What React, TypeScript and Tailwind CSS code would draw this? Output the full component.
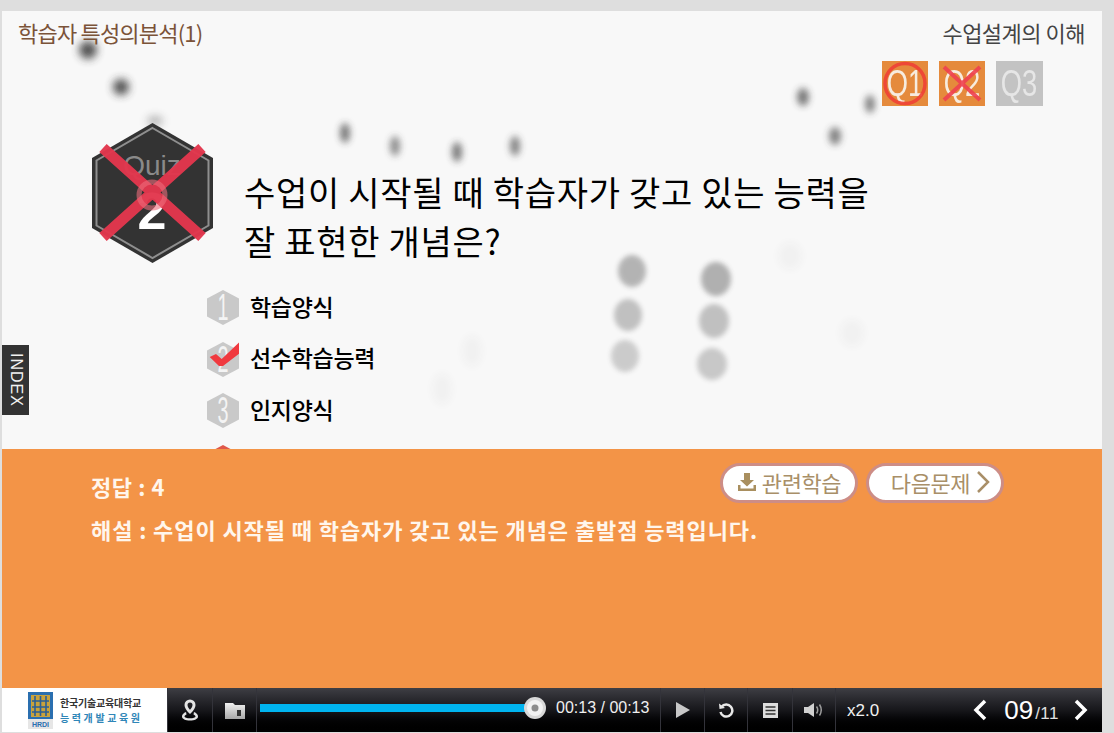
const kr = "font-['Noto_Sans_CJK_KR','Noto_Sans',sans-serif]";

const dots = [
  { x: 86, y: 39, rx: 9, ry: 9, o: 0.85, b: "b6" },
  { x: 119, y: 76, rx: 8, ry: 8, o: 0.85, b: "b6" },
  { x: 153, y: 110, rx: 8, ry: 5, o: 0.35, b: "b6" },
  { x: 343, y: 122, rx: 5, ry: 10, o: 0.65, b: "b4" },
  { x: 393, y: 135, rx: 5, ry: 10, o: 0.55, b: "b4" },
  { x: 455, y: 141, rx: 5, ry: 10, o: 0.65, b: "b4" },
  { x: 513, y: 135, rx: 5, ry: 10, o: 0.6, b: "b4" },
  { x: 801, y: 86, rx: 6, ry: 9, o: 0.65, b: "b4" },
  { x: 868, y: 93, rx: 5, ry: 9, o: 0.6, b: "b4" },
  { x: 833, y: 125, rx: 6, ry: 9, o: 0.6, b: "b4" },
  { x: 630, y: 260, rx: 14, ry: 16, o: 0.34, b: "b2" },
  { x: 714, y: 268, rx: 15, ry: 17, o: 0.36, b: "b2" },
  { x: 626, y: 304, rx: 14, ry: 16, o: 0.28, b: "b2" },
  { x: 712, y: 310, rx: 15, ry: 17, o: 0.28, b: "b2" },
  { x: 623, y: 345, rx: 14, ry: 16, o: 0.22, b: "b2" },
  { x: 710, y: 353, rx: 15, ry: 16, o: 0.24, b: "b2" },
  { x: 788, y: 245, rx: 12, ry: 14, o: 0.03, b: "b6" },
  { x: 850, y: 322, rx: 12, ry: 14, o: 0.03, b: "b6" },
  { x: 470, y: 340, rx: 10, ry: 16, o: 0.03, b: "b6" },
  { x: 440, y: 378, rx: 10, ry: 16, o: 0.03, b: "b6" },
];

function Backdrop() {
  return (
    <svg className="absolute inset-0" width="1100" height="438">
      <defs>
        <filter id="b2" x="-100%" y="-100%" width="300%" height="300%">
          <feGaussianBlur stdDeviation="2.500" />
        </filter>
        <filter id="b4" x="-150%" y="-100%" width="400%" height="300%">
          <feGaussianBlur stdDeviation="3.500" />
        </filter>
        <filter id="b6" x="-100%" y="-100%" width="300%" height="300%">
          <feGaussianBlur stdDeviation="4.500" />
        </filter>
      </defs>
      {dots.map((d, i) => (
        <ellipse key={i} cx={d.x} cy={d.y} rx={d.rx} ry={d.ry} fill="#333333" opacity={d.o} filter={`url(#${d.b})`} />
      ))}
    </svg>
  );
}

function QBadge({ label, bg, mark }: { label: string; bg: string; mark?: "o" | "x" }) {
  return (
    <div className={`relative flex h-[45px] ${label === "Q3" ? "w-[47px]" : "w-[46px]"} items-center justify-center overflow-hidden ${bg}`}>
      <span className={`font-['Liberation_Sans',sans-serif] text-[36px] leading-none scale-x-[0.76] ${label === "Q3" ? "text-[#e6e6e6]" : "text-[#f7ecdf]"}`}>{label}</span>
      {mark === "o" && (
        <svg width="46" height="45" className="absolute inset-0">
          <circle cx="23" cy="22.500" r="20" fill="none" stroke="#ee4035" strokeWidth="3.500" opacity="0.9" />
        </svg>
      )}
      {mark === "x" && (
        <svg width="46" height="45" className="absolute inset-0">
          <path d="M5 6 L41 39 M41 6 L5 39" stroke="#ee4050" strokeWidth="4" opacity="0.9" fill="none" />
        </svg>
      )}
    </div>
  );
}

function QuizHex() {
  return (
    <svg width="121" height="140" viewBox="0 0 121 140" className="shrink-0">
      <polygon points="60.5,0 121,35 121,105 60.5,140 0,105 0,35" fill="#333333" />
      <polygon points="60.5,5 116.5,37.5 116.5,102.5 60.5,135 4.500,102.5 4.500,37.5" fill="none" stroke="#8f8f8f" strokeWidth="2" />
      <text x="60" y="52" textAnchor="middle" fontSize="28" fontFamily="'Liberation Sans',sans-serif" fill="#8a8a8a">
        Quiz
      </text>
      <text x="60" y="106" textAnchor="middle" fontSize="52" fontWeight="700" fontFamily="'Liberation Sans',sans-serif" fill="#ffffff">
        2
      </text>
      <path d="M11 25 L110 114 M110 25 L11 114" stroke="#e2374d" strokeWidth="11" opacity="0.97" fill="none" />
      <circle cx="60" cy="72" r="13" fill="none" stroke="#ec6c7c" strokeWidth="5" opacity="0.6" />
    </svg>
  );
}

function OptionHex({ n, checked, red }: { n: number; checked?: boolean; red?: boolean }) {
  return (
    <svg width="34" height="35" viewBox="0 0 34 35" className="shrink-0 overflow-visible">
      <polygon points="17,0 33,8.500 33,26.500 17,35 1,26.500 1,8.500" fill={red ? "#e0584a" : "#c9c9c9"} />
      {!red && (
        <text x="17" y="30" textAnchor="middle" fontSize="36" textLength="11" lengthAdjust="spacingAndGlyphs" fontFamily="'Liberation Sans',sans-serif" fill="#f4f4f4">
          {n}
        </text>
      )}
      {checked && <polygon points="3.700,15 10,12 15.700,17 33,0.500 33,11.700 17,24 13,24" fill="#f0393f" />}
    </svg>
  );
}

const options = ["학습양식", "선수학습능력", "인지양식", ""];

function Question() {
  return (
    <section className="relative h-[438px] overflow-hidden bg-[#f8f8f8]">
      <Backdrop />
      <div className="relative">
        <header className="flex h-[37px] items-end justify-between pl-[16px] pr-[17px]">
          <h1 className={`${kr} h-[31px] text-[22px] leading-[31px] tracking-[-0.8px] text-[#7b5338]`}>학습자 특성의분석(1)</h1>
          <p className={`${kr} h-[31px] text-[22px] leading-[31px] tracking-[-0.5px] text-[#444444]`}>수업설계의 이해</p>
        </header>
        <div className="mt-[13px] flex justify-end gap-[11px] pr-[59px]">
          <QBadge label="Q1" bg="bg-[#e58a3c]" mark="o" />
          <QBadge label="Q2" bg="bg-[#e58a3c]" mark="x" />
          <QBadge label="Q3" bg="bg-[#c3c3c3]" />
        </div>
        <div className="mt-[17px] flex pl-[90px]">
          <QuizHex />
          <h2 className={`${kr} ml-[31px] mt-[44px] text-[34px] leading-[49px] tracking-[0.7px] text-black`}>
            수업이 시작될 때 학습자가 갖고 있는 능력을
            <br />
            잘 표현한 개념은?
          </h2>
        </div>
        <ul className="mt-[25px] flex flex-col gap-[16.6px] pl-[204px]">
          {options.map((o, i) => (
            <li key={i} className="flex h-[35px] items-center gap-[10px]">
              <OptionHex n={i + 1} checked={i === 1} red={i === 3} />
              {o && <span className={`${kr} pb-[3px] text-[23px] font-medium tracking-[-0.3px] text-black`}>{o}</span>}
            </li>
          ))}
        </ul>
      </div>
    </section>
  );
}

function PillButton({ extra, children }: { extra?: string; children: React.ReactNode }) {
  return (
    <button className={`${kr} flex h-[40px] w-[138px] items-center justify-center gap-[5px] rounded-full border-[3px] border-[#cd8d86] bg-white pb-[2px] text-[22px] tracking-[-0.4px] text-[#a98f68] ${extra ?? ""}`}>
      {children}
    </button>
  );
}

function Answer() {
  return (
    <section className="flex h-[239px] flex-col bg-[#f39447] pl-[89px] pr-[98px] pt-[14px]">
      <div className="flex items-start justify-between">
        <p className={`${kr} mt-[7px] text-[22px] font-bold tracking-[0.6px] text-[#fff6ec]`}>정답 : 4</p>
        <div className="flex gap-[8px]">
          <PillButton>
            <svg width="20" height="20" viewBox="0 0 20 20">
              <path d="M7 1 H13 V8 H17 L10 14.500 L3 8 H7 Z" fill="#a98f5f" />
              <path d="M1 13 V19 H19 V13 H16.500 V16.500 H3.500 V13 Z" fill="#a98f5f" />
            </svg>
            관련학습
          </PillButton>
          <PillButton extra="pl-[11px] gap-[6px]">
            다음문제
            <svg width="14" height="24" viewBox="0 0 14 24">
              <path d="M2 2 L12 12 L2 22" fill="none" stroke="#a98f68" strokeWidth="2.500" />
            </svg>
          </PillButton>
        </div>
      </div>
      <p className={`${kr} mt-[10px] text-[22px] font-bold tracking-[0.9px] text-[#fff6ec]`}>해설 : 수업이 시작될 때 학습자가 갖고 있는 개념은 출발점 능력입니다.</p>
    </section>
  );
}

function Cell({ w, children }: { w: string; children: React.ReactNode }) {
  return <div className={`flex h-full ${w} shrink-0 items-center justify-center border-l border-[#33333a]`}>{children}</div>;
}

function Logo() {
  return (
    <div className="flex h-full w-[165px] shrink-0 items-center gap-[7px] bg-white pl-[26px]">
      <svg width="25" height="37" viewBox="0 0 25 37" className="shrink-0">
        <rect width="25" height="37" fill="#2a6fb0" />
        <rect x="3" y="3" width="19" height="22" fill="#c9a23c" />
        <path d="M7 4 V24 M12.500 4 V24 M18 4 V24 M4 9 H21 M4 15 H21 M4 20 H21" stroke="#2a5f96" strokeWidth="1.600" />
        <rect y="27" width="25" height="10" fill="#e6e6e6" />
        <text x="12.500" y="35" textAnchor="middle" fontSize="7" fontWeight="700" fontFamily="'Liberation Sans',sans-serif" fill="#2a6fb0">
          HRDI
        </text>
      </svg>
      <div className={`${kr} flex flex-col gap-[2px] font-bold`}>
        <span className="text-[10px] leading-[13px] tracking-[-0.2px] text-[#333333]">한국기술교육대학교</span>
        <span className="text-[10px] leading-[13px] tracking-[2.600px] text-[#2f86b8]">능력개발교육원</span>
      </div>
    </div>
  );
}

function Player() {
  return (
    <footer className="flex h-[44px] bg-gradient-to-b from-[#3e3e44] via-[#17171b] to-black font-['Liberation_Sans',sans-serif] text-white">
      <Logo />
      <Cell w="w-[45px]">
        <svg width="18" height="22" viewBox="0 0 18 22">
          <path d="M9 13 C6.500 10.500 5 8.500 5 6 A4 4 0 0 1 13 6 C13 8.500 11.500 10.500 9 13 Z" fill="none" stroke="#e4e4e4" strokeWidth="3" />
          <path d="M5 13 C2.500 14 1 15.500 1 17.500 C1 20 4.500 21.500 9 21.500 C13.500 21.500 17 20 17 17.500 C17 15.500 15.500 14 13 13 L12.500 15.500 C13.800 16 14.500 16.800 14.500 17.500 C14.500 18.500 12 19.300 9 19.300 C6 19.300 3.500 18.500 3.500 17.500 C3.500 16.800 4.200 16 5.500 15.500 Z" fill="#e4e4e4" />
        </svg>
      </Cell>
      <Cell w="w-[44px]">
        <svg width="20" height="17" viewBox="0 0 20 17">
          <defs>
            <linearGradient id="folder" x1="0" y1="0" x2="0" y2="1">
              <stop offset="0" stopColor="#f0f0f0" />
              <stop offset="1" stopColor="#a8a8a8" />
            </linearGradient>
          </defs>
          <path d="M0 1 H8 L10 3 H20 V17 H0 Z" fill="url(#folder)" />
          <rect x="12" y="8" width="4" height="6" fill="#333333" />
        </svg>
      </Cell>
      <div className="flex h-full w-[404px] shrink-0 items-center border-l border-[#33333a] pl-[3px] pb-[4px]">
        <div className="h-[8px] w-[265px] bg-[#00b4f0]" />
        <svg width="24" height="24" viewBox="0 0 24 24" className="-ml-[2px] shrink-0">
          <circle cx="12" cy="12" r="11" fill="#d8d8d8" />
          <circle cx="12" cy="12" r="8" fill="#f2f2f2" />
          <circle cx="12" cy="12" r="3.500" fill="#8c8c8c" />
        </svg>
        <span className="ml-[9px] text-[16px] leading-none text-[#f0f0f0]">00:13 / 00:13</span>
      </div>
      <Cell w="w-[44px]">
        <svg width="14" height="16" viewBox="0 0 14 16">
          <path d="M0 0 L14 8 L0 16 Z" fill="#c8c8c8" />
        </svg>
      </Cell>
      <Cell w="w-[43px]">
        <svg width="16" height="16" viewBox="0 0 16 16">
          <path d="M3.500 5 A6 6 0 1 1 2.500 10" fill="none" stroke="#e8e8e8" strokeWidth="2.500" />
          <path d="M1 1.500 L1.500 7 L7 6 Z" fill="#e8e8e8" />
        </svg>
      </Cell>
      <Cell w="w-[45px]">
        <svg width="15" height="15" viewBox="0 0 15 15">
          <rect width="15" height="15" fill="#dddddd" />
          <path d="M2.500 4 H12.500 M2.500 7.500 H12.500 M2.500 11 H12.500" stroke="#333333" strokeWidth="1.500" />
        </svg>
      </Cell>
      <Cell w="w-[43px]">
        <svg width="20" height="14" viewBox="0 0 20 14">
          <path d="M0 4 H4 L10 0 V14 L4 10 H0 Z" fill="#d0d0d0" />
          <path d="M12.500 3.500 Q15 7 12.500 10.500 M15.500 1.500 Q19 7 15.500 12.500" fill="none" stroke="#9c9c9c" strokeWidth="1.500" />
        </svg>
      </Cell>
      <div className="flex h-full flex-1 items-center border-l border-[#33333a] pl-[11px] pr-[14px]">
        <span className="text-[17px] leading-none text-[#f0f0f0]">x2.0</span>
        <svg width="14" height="22" viewBox="0 0 14 22" className="ml-auto">
          <path d="M12 2 L3 11 L12 20" fill="none" stroke="#ffffff" strokeWidth="3.500" />
        </svg>
        <span className="ml-[17px] text-[26px] leading-none">09</span>
        <span className="ml-[2px] mt-[6px] text-[17px] leading-none tracking-[0.5px] text-[#e0e0e0]">/11</span>
        <svg width="14" height="22" viewBox="0 0 14 22" className="ml-[15px]">
          <path d="M2 2 L11 11 L2 20" fill="none" stroke="#ffffff" strokeWidth="3.500" />
        </svg>
      </div>
    </footer>
  );
}

export default function App() {
  return (
    <div className="relative h-[733px] w-[1114px] overflow-hidden bg-[#dedede] pl-[2px] pt-[11px]">
      <main className="w-[1100px]">
        <Question />
        <Answer />
        <Player />
      </main>
      <div className="absolute left-[2px] top-[345px] flex h-[70px] w-[27px] items-center justify-center bg-[#333333] font-['Liberation_Sans',sans-serif] text-[16px] tracking-[1px] text-[#f2f2f2] [writing-mode:vertical-rl]">
        INDEX
      </div>
    </div>
  );
}
